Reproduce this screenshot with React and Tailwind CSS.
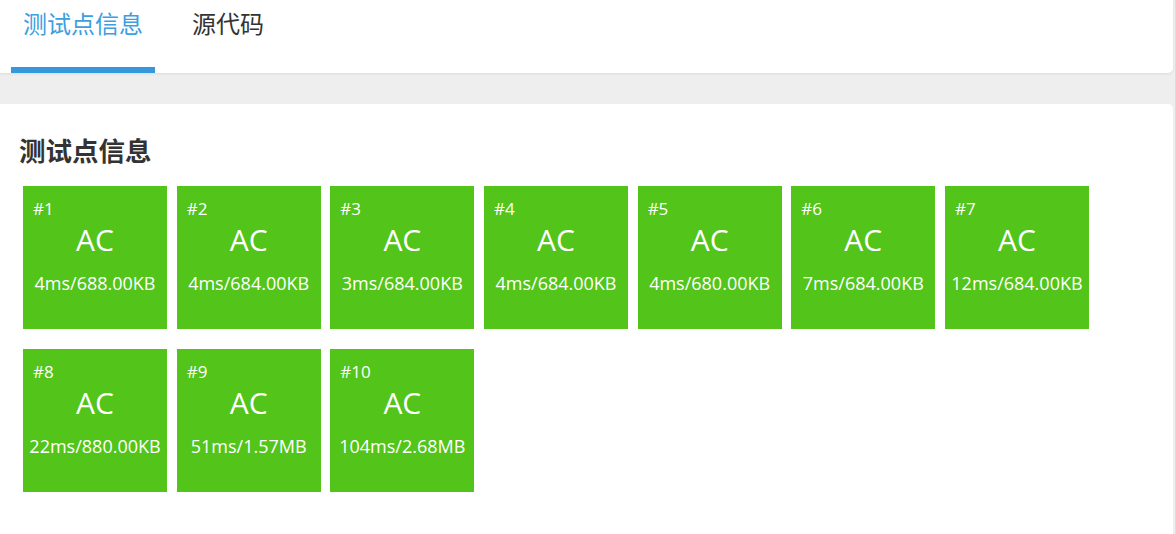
import React from 'react';

const cases = [
  { id: 1, time: '4ms', mem: '688.00KB' },
  { id: 2, time: '4ms', mem: '684.00KB' },
  { id: 3, time: '3ms', mem: '684.00KB' },
  { id: 4, time: '4ms', mem: '684.00KB' },
  { id: 5, time: '4ms', mem: '680.00KB' },
  { id: 6, time: '7ms', mem: '684.00KB' },
  { id: 7, time: '12ms', mem: '684.00KB' },
  { id: 8, time: '22ms', mem: '880.00KB' },
  { id: 9, time: '51ms', mem: '1.57MB' },
  { id: 10, time: '104ms', mem: '2.68MB' },
];

const font = { fontFamily: '"Open Sans", "Noto Sans CJK SC", sans-serif' };

const CaseBox = ({ c }) => (
  <div className="w-[144px] h-[143px] bg-[#52c41a] text-white pt-[11px]">
    <div className="pl-[10px] text-[17px] leading-[24px]">#{c.id}</div>
    <div className="mt-[1px] text-center text-[30px] leading-[36px]">AC</div>
    <div className="mt-[13px] text-center text-[18px] leading-[24px] whitespace-nowrap">
      {c.time}/{c.mem}
    </div>
  </div>
);

export default function App() {
  return (
    <div className="min-h-screen bg-[#eeeeee] pr-[2px] border-r border-[#dddddd]" style={font}>
      <div className="bg-white h-[73px] rounded-br-[5px] shadow-[0_1px_3px_rgba(0,0,0,0.08)] flex items-end pl-[11px]">
        <div className="w-[144px] h-[73px] flex flex-col items-center border-b-[6px] border-[#3498db]">
          <span className="mt-[8px] text-[24px] leading-[32px] text-[#3d9ee0]">测试点信息</span>
        </div>
        <div className="ml-[25px] h-[73px] px-[12px]">
          <span className="block mt-[8px] text-[24px] leading-[32px] text-[#333333]">源代码</span>
        </div>
      </div>
      <div className="mt-[31px] bg-white rounded-tr-[5px] min-h-[430px] pt-[82px] pl-[23px] relative">
        <h2 className="absolute left-[19px] top-[27px] text-[26.5px] leading-[40px] font-bold text-[#333333]">测试点信息</h2>
        <div className="flex flex-wrap gap-x-[9.67px] gap-y-[20px] w-[1080px]">
          {cases.map((c) => (
            <CaseBox key={c.id} c={c} />
          ))}
        </div>
      </div>
    </div>
  );
}
